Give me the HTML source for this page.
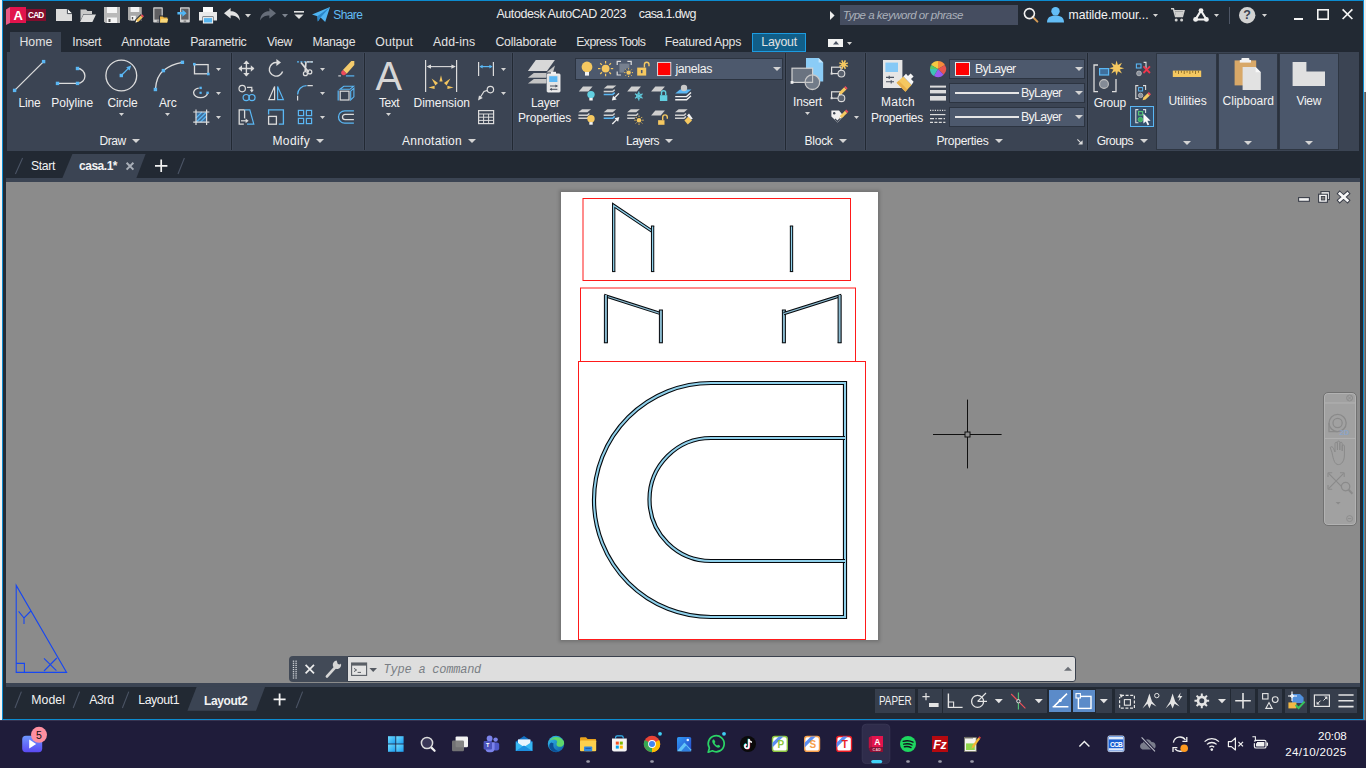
<!DOCTYPE html>
<html lang="en">
<head>
<meta charset="utf-8">
<title>Autodesk AutoCAD 2023 - casa.1.dwg</title>
<style>
*{margin:0;padding:0;box-sizing:border-box}
html,body{width:1366px;height:768px;overflow:hidden;background:#222933}
body{font-family:"Liberation Sans",sans-serif;font-size:12px;color:#f0f0f0;position:relative}
.a{position:absolute}
.t{position:absolute;white-space:nowrap;line-height:14px;color:#f2f2f2}
.b{font-weight:bold}
svg{position:absolute;overflow:visible}
.sep{position:absolute;width:3px;margin-left:-1px;border-left:1px solid #404959;border-right:1px solid #404959;background:#222933;top:53px;height:97px}
.dd{position:absolute;background:#4d596d;border:1px solid #2c3441}
.pl{position:absolute;background:#4b576b;box-shadow:0 0 0 1px #2e3642}
.sb{position:absolute;top:689px;height:23.6px;background:#363e4c}
/*SKEL-END*/
</style>
</head>
<body>
<!-- window frame -->
<div class="a" style="left:0;top:0;width:2px;height:720px;background:#f4f4f4"></div>
<div class="a" style="left:2px;top:0;width:1362px;height:720px;background:#0c8bd0"></div>
<div class="a" style="left:1364px;top:0;width:1px;height:720px;background:#827c7a"></div><div class="a" style="left:1365px;top:0;width:1px;height:720px;background:#5d5d60"></div>
<div class="a" style="left:1364px;top:0;width:2px;height:92px;background:#ececec"></div>
<div class="a" id="win" style="left:3px;top:1px;width:1359.5px;height:718px;background:#222933"></div>

<!-- ribbon background -->
<div class="a" style="left:7px;top:52px;width:1352px;height:99px;background:#3b4453"></div>
<!-- home tab -->
<div class="a" style="left:10px;top:32px;width:51px;height:20px;background:#3b4453"></div>
<!-- layout tab -->
<div class="a" style="left:752px;top:33px;width:54px;height:19px;background:#115e88;border:1px solid #1c9be0"></div>

<!--TITLEBAR-->
<svg style="left:6px;top:7px" width="40" height="18" viewBox="0 0 40 18"><path d="M4 0L0 2.6V18L4 16Z" fill="#ea5a84"/><rect x="4" y="0" width="16" height="16" fill="#e1134c"/><rect x="20" y="2" width="20" height="12" fill="#810d2d"/></svg>
<div class="t" style="left:13.6px;top:8.1px;font-size:13px;line-height:16px;color:#fff;letter-spacing:-0.39px;font-weight:bold;">A</div>
<div class="t" style="left:28.1px;top:10.5px;font-size:8.2px;line-height:10px;color:#fff;letter-spacing:-0.86px;font-weight:bold;">CAD</div>
<svg style="left:56px;top:9px" width="16" height="12" viewBox="0 0 16 12"><path d="M0 0H11.4L16 4.6V12H0Z" fill="#dcdcdc"/><path d="M11.4 0V4.6H16Z" fill="#f8f8f8"/><path d="M11.4 0V4.6H16" fill="none" stroke="#222933" stroke-width="0.8"/></svg>
<svg style="left:80px;top:9px" width="16" height="13" viewBox="0 0 16 13"><path d="M0.5 11.5V0.5H6L7.5 2H12V5H3.5Z" fill="#c9c9c9"/><path d="M3.6 5.5H16L12.4 13H0Z" fill="#dedede"/></svg>
<svg style="left:104px;top:7px" width="16" height="16" viewBox="0 0 16 16"><path d="M0 0H16V16H1.5L0 14.5Z" fill="#b9b9b9"/><rect x="3" y="0" width="10" height="6" fill="#f4f4f4"/><rect x="3" y="10.5" width="10" height="5.5" fill="#f4f4f4"/><rect x="4.5" y="12" width="2" height="3" fill="#555"/></svg>
<svg style="left:128px;top:7px" width="16" height="16" viewBox="0 0 16 16"><path d="M0 0H13.8V13.4H1.2L0 12.2Z" fill="#a9a9a9"/><rect x="2.6" y="0" width="8.6" height="5" fill="#f2f2f2"/><rect x="2.8" y="8.8" width="5" height="4.6" fill="#f2f2f2"/><rect x="3.8" y="10" width="1.4" height="2.4" fill="#555"/><path d="M6.4 16.4L7.4 12.4L12.6 7.2L15.8 10.4L10.6 15.6Z" fill="#222933"/><path d="M7.6 15.4L8.4 12.8L12.8 8.4L14.8 10.4L10.4 14.8Z" fill="#f2c35c"/><path d="M12.8 8.4L14 7.2L16 9.2L14.8 10.4Z" fill="#ee4a5c"/><path d="M7.6 15.4L8.2 13.4L9.6 14.8Z" fill="#fff"/></svg>
<svg style="left:152px;top:7px" width="16" height="16" viewBox="0 0 16 16"><rect x="1.2" y="0.2" width="9.6" height="15.4" rx="0.8" fill="#d0d0d0"/><rect x="2.4" y="1.6" width="7.2" height="11" fill="#5f5f62"/><rect x="4.8" y="13.6" width="2.6" height="1" fill="#666"/><path d="M7.2 16.2V8.6H11.2L12.2 9.8H16.4V16.2Z" fill="#222933"/><path d="M8 9.4H10.8L11.8 10.6H15.4V15.6H8Z" fill="#eeb541"/><path d="M9.2 11.8H16.2L15 15.6H8Z" fill="#f8d87c"/></svg>
<svg style="left:177px;top:7px" width="14" height="16" viewBox="0 0 14 16"><rect x="3" y="0.2" width="9.8" height="15.4" rx="0.8" fill="#d0d0d0"/><rect x="4.2" y="1.6" width="7.4" height="11" fill="#5f5f62"/><rect x="6.6" y="13.6" width="2.6" height="1" fill="#666"/><path d="M0.4 5H5.4V2.6L9.6 6.2L5.4 9.8V7.4H0.4Z" fill="#52b6f4"/></svg>
<svg style="left:199px;top:7px" width="18" height="16" viewBox="0 0 18 16"><rect x="4" y="0" width="10" height="5" fill="#fafafa"/><path d="M0 5H18V13.5H14.5V9.5H3.5V13.5H0Z" fill="#e9e9e9"/><rect x="4.4" y="10.6" width="9.2" height="5.4" fill="#58b6f0" stroke="#f4f4f4" stroke-width="1"/></svg>
<svg style="left:224px;top:8px" width="16" height="13" viewBox="0 0 16 13"><path d="M0 5.2L6.6 0V3.2C11.6 3.2 15.4 5.8 16 12.6C13.6 8.6 10.6 7.6 6.6 7.6V10.6Z" fill="#e2e2e2"/></svg>
<svg style="left:245.0px;top:13.7px" width="6" height="3.6" viewBox="0 0 6 3.6"><path d="M0 0H6L3.0 3.6Z" fill="#d4d4d4"/></svg>
<svg style="left:259.5px;top:8px" width="16" height="13" viewBox="0 0 16 13"><path d="M16 5.2L9.4 0V3.2C4.4 3.2 0.6 5.8 0 12.6C2.4 8.6 5.4 7.6 9.4 7.6V10.6Z" fill="#666d79"/></svg>
<svg style="left:282.0px;top:13.7px" width="6" height="3.6" viewBox="0 0 6 3.6"><path d="M0 0H6L3.0 3.6Z" fill="#7d848f"/></svg>
<svg style="left:294px;top:10.5px" width="10" height="8" viewBox="0 0 10 8"><rect x="0" y="0" width="10" height="1.6" fill="#e0e0e0"/><path d="M0.4 3.4H9.6L5 8Z" fill="#e0e0e0"/></svg>
<svg style="left:312px;top:7px" width="18" height="16" viewBox="0 0 18 16"><path d="M0 7.4L18 0L13.2 15L8.6 10.4L5.8 14.6L5.4 9.2Z" fill="#4fb3f1"/><path d="M5.4 9.2L18 0L8.6 10.4L5.8 14.6Z" fill="#2b86c8"/></svg>
<div class="t" style="left:333.3px;top:7.8px;font-size:12px;line-height:14px;color:#63bdf6;letter-spacing:-0.60px;">Share</div>
<div class="t" style="left:496.4px;top:7.3px;font-size:12.5px;line-height:15px;color:#ececec;letter-spacing:-0.41px;">Autodesk AutoCAD 2023</div>
<div class="t" style="left:638.8px;top:7.3px;font-size:12.5px;line-height:15px;color:#ececec;letter-spacing:-0.63px;">casa.1.dwg</div>
<svg style="left:830px;top:10.6px" width="5" height="9" viewBox="0 0 5 9"><path d="M0 0L4.6 4.5L0 9Z" fill="#eee"/></svg>
<div class="a" style="left:840px;top:5px;width:178px;height:20px;background:#454d60;"></div>
<div class="t" style="left:842.8px;top:8.2px;font-size:11.5px;line-height:14px;color:#aab0ba;letter-spacing:-0.50px;font-style:italic;">Type a keyword or phrase</div>
<svg style="left:1023px;top:7px" width="16" height="16" viewBox="0 0 16 16"><path d="M9.6 9.8L14.4 14.6" stroke="#d49a55" stroke-width="2" stroke-linecap="round"/><circle cx="6.4" cy="6.6" r="5" fill="none" stroke="#f2f2f2" stroke-width="1.6"/></svg>
<svg style="left:1046.5px;top:7px" width="17" height="15.5" viewBox="0 0 17 15.5"><circle cx="8.5" cy="4.2" r="4.2" fill="#63bdf6"/><path d="M0 15.5C0 10.6 3.4 8.6 8.5 8.6S17 10.6 17 15.5Z" fill="#63bdf6"/></svg>
<div class="t" style="left:1068.6px;top:7.9px;font-size:12.2px;line-height:15px;color:#f4f4f4;letter-spacing:-0.00px;">matilde.mour...</div>
<svg style="left:1153.0px;top:14.0px" width="5" height="3" viewBox="0 0 5 3"><path d="M0 0H5L2.5 3Z" fill="#d4d4d4"/></svg>
<svg style="left:1170.5px;top:8px" width="13.5" height="14" viewBox="0 0 13.5 14"><path d="M0 0.8H2.4L4.6 8.6H11.4L13 2.8H3.2" fill="none" stroke="#d0d0d0" stroke-width="1.5"/><path d="M3.8 3.4H12.6L11.2 8H5Z" fill="#d0d0d0"/><circle cx="5.2" cy="12" r="1.5" fill="#d0d0d0"/><circle cx="10.6" cy="12" r="1.5" fill="#d0d0d0"/></svg>
<svg style="left:1192.5px;top:8px" width="16" height="14" viewBox="0 0 16 14"><path d="M8 2.6L2.4 11.6H13.6Z" fill="none" stroke="#f0f0f0" stroke-width="2"/><circle cx="8" cy="2.6" r="2.4" fill="#f0f0f0"/><circle cx="2.6" cy="11.4" r="2.4" fill="#f0f0f0"/><circle cx="13.4" cy="11.4" r="2.4" fill="#f0f0f0"/></svg>
<svg style="left:1214.1px;top:14.0px" width="5" height="3" viewBox="0 0 5 3"><path d="M0 0H5L2.5 3Z" fill="#d4d4d4"/></svg>
<div class="a" style="left:1229.4px;top:7px;width:1px;height:17px;background:#4e5666;"></div>
<svg style="left:1238.6px;top:7px" width="16.4" height="16.4" viewBox="0 0 16.4 16.4"><circle cx="8.2" cy="8.2" r="8.2" fill="#d2d2d2"/></svg>
<div class="t" style="left:1243.2px;top:7.8px;font-size:12.5px;line-height:15px;color:#3a4250;font-weight:bold;">?</div>
<svg style="left:1261.5px;top:14.0px" width="5" height="3" viewBox="0 0 5 3"><path d="M0 0H5L2.5 3Z" fill="#d4d4d4"/></svg>
<div class="a" style="left:1293.5px;top:18px;width:9px;height:2px;background:#f4f4f4;"></div>
<svg style="left:1317px;top:9px" width="12" height="11" viewBox="0 0 12 11"><rect x="0.8" y="0.8" width="10.4" height="9.4" fill="none" stroke="#f4f4f4" stroke-width="1.6"/></svg>
<svg style="left:1342px;top:9px" width="11" height="10.4" viewBox="0 0 11 10.4"><path d="M0.6 0.4L10.4 10M10.4 0.4L0.6 10" stroke="#f4f4f4" stroke-width="1.7"/></svg>
<div class="a" style="left:828px;top:38.6px;width:15px;height:8.4px;background:#f2f2f2;"></div>
<svg style="left:832.5px;top:41px" width="6" height="3.4" viewBox="0 0 6 3.4"><path d="M0 3.4H6L3 0Z" fill="#4a5262"/></svg>
<svg style="left:847.1px;top:41.5px" width="5" height="3" viewBox="0 0 5 3"><path d="M0 0H5L2.5 3Z" fill="#d4d4d4"/></svg>

<!--RIBBONTABS-->
<div class="t" style="left:19.4px;top:35.3px;font-size:12.3px;line-height:15px;color:#e2e2e2;letter-spacing:0.05px;">Home</div>
<div class="t" style="left:72.3px;top:35.3px;font-size:12.3px;line-height:15px;color:#e2e2e2;letter-spacing:-0.33px;">Insert</div>
<div class="t" style="left:121.2px;top:35.3px;font-size:12.3px;line-height:15px;color:#e2e2e2;letter-spacing:-0.06px;">Annotate</div>
<div class="t" style="left:190.2px;top:35.3px;font-size:12.3px;line-height:15px;color:#e2e2e2;letter-spacing:-0.32px;">Parametric</div>
<div class="t" style="left:267.0px;top:35.3px;font-size:12.3px;line-height:15px;color:#e2e2e2;letter-spacing:-0.36px;">View</div>
<div class="t" style="left:312.5px;top:35.3px;font-size:12.3px;line-height:15px;color:#e2e2e2;letter-spacing:-0.29px;">Manage</div>
<div class="t" style="left:375.3px;top:35.3px;font-size:12.3px;line-height:15px;color:#e2e2e2;letter-spacing:0.13px;">Output</div>
<div class="t" style="left:433.0px;top:35.3px;font-size:12.3px;line-height:15px;color:#e2e2e2;letter-spacing:0.07px;">Add-ins</div>
<div class="t" style="left:495.4px;top:35.3px;font-size:12.3px;line-height:15px;color:#e2e2e2;letter-spacing:-0.18px;">Collaborate</div>
<div class="t" style="left:576.2px;top:35.3px;font-size:12.3px;line-height:15px;color:#e2e2e2;letter-spacing:-0.56px;">Express Tools</div>
<div class="t" style="left:664.7px;top:35.3px;font-size:12.3px;line-height:15px;color:#e2e2e2;letter-spacing:-0.28px;">Featured Apps</div>
<div class="t" style="left:761.3px;top:35.3px;font-size:12.3px;line-height:15px;color:#e2e2e2;letter-spacing:-0.21px;">Layout</div>

<!--RIBBON-->
<div class="sep" style="left:231px"></div>
<div class="sep" style="left:364px"></div>
<div class="sep" style="left:512px"></div>
<div class="sep" style="left:785px"></div>
<div class="sep" style="left:865px"></div>
<div class="sep" style="left:1087px"></div>
<svg style="left:0px;top:0px" width="232" height="150" viewBox="0 0 232 150"><path d="M14.6 90.4L43.6 61.6" stroke="#dcdcdc" stroke-width="1.3"/><rect x="12.9" y="88.7" width="3.4" height="3.4" fill="#5ab7f4"/><rect x="41.9" y="59.9" width="3.4" height="3.4" fill="#5ab7f4"/><path d="M57.5 83.4H77.5A7.45 7.45 0 0 0 77.5 68.5" fill="none" stroke="#dcdcdc" stroke-width="1.3"/><rect x="55.8" y="81.7" width="3.4" height="3.4" fill="#5ab7f4"/><rect x="75.8" y="81.7" width="3.4" height="3.4" fill="#5ab7f4"/><rect x="75.8" y="66.8" width="3.4" height="3.4" fill="#5ab7f4"/><circle cx="121.3" cy="75.5" r="15.4" fill="none" stroke="#dcdcdc" stroke-width="1.3"/><rect x="119.6" y="73.8" width="3.4" height="3.4" fill="#5ab7f4"/><path d="M122.5 74.3L129.4 67.4" stroke="#5ab7f4" stroke-width="1.3"/><path d="M131.2 65.4L126.2 67.2L129.6 70.4Z" fill="#5ab7f4"/><path d="M155.4 89.5C156 80 158.5 74.5 163.4 70.6C168 66.6 174 63.6 182.4 62.3" fill="none" stroke="#dcdcdc" stroke-width="1.3"/><rect x="153.7" y="87.8" width="3.4" height="3.4" fill="#5ab7f4"/><rect x="161.7" y="68.9" width="3.4" height="3.4" fill="#5ab7f4"/><rect x="180.7" y="60.6" width="3.4" height="3.4" fill="#5ab7f4"/><rect x="194.5" y="64.6" width="13.6" height="9.2" fill="none" stroke="#dcdcdc" stroke-width="1.3"/><rect x="193.0" y="62.9" width="2.6" height="2.6" fill="#5ab7f4"/><rect x="207.0" y="72.7" width="2.6" height="2.6" fill="#5ab7f4"/><ellipse cx="200.6" cy="92.8" rx="7" ry="4.9" fill="none" stroke="#dcdcdc" stroke-width="1.3" stroke-dasharray="26 5 0"/><rect x="199.5" y="91.7" width="2.2" height="2.2" fill="#5ab7f4"/><rect x="206.4" y="91.6" width="2.4" height="2.4" fill="#5ab7f4"/><rect x="199.4" y="86.7" width="2.4" height="2.4" fill="#5ab7f4"/><rect x="196" y="112" width="10.6" height="10.2" fill="#3f6f9c"/><path d="M196 118L202 112M196 122.2L206.6 112M200.4 122.2L206.6 116" stroke="#5ab7f4" stroke-width="1.2"/><path d="M196 109.4V125M206.6 109.4V125M193.2 112H209.4M193.2 122.2H209.4" stroke="#dcdcdc" stroke-width="1.2"/></svg>
<div class="t" style="left:18.5px;top:95.8px;font-size:12px;line-height:14px;color:#f2f2f2;letter-spacing:-0.17px;">Line</div>
<div class="t" style="left:51.3px;top:95.8px;font-size:12px;line-height:14px;color:#f2f2f2;letter-spacing:-0.03px;">Polyline</div>
<div class="t" style="left:107.5px;top:95.8px;font-size:12px;line-height:14px;color:#f2f2f2;letter-spacing:-0.11px;">Circle</div>
<div class="t" style="left:159.0px;top:95.8px;font-size:12px;line-height:14px;color:#f2f2f2;letter-spacing:-0.13px;">Arc</div>
<svg style="left:119.2px;top:113.1px" width="5" height="3" viewBox="0 0 5 3"><path d="M0 0H5L2.5 3Z" fill="#d4d4d4"/></svg>
<svg style="left:164.9px;top:113.1px" width="5" height="3" viewBox="0 0 5 3"><path d="M0 0H5L2.5 3Z" fill="#d4d4d4"/></svg>
<svg style="left:216.3px;top:67.9px" width="5" height="3" viewBox="0 0 5 3"><path d="M0 0H5L2.5 3Z" fill="#d4d4d4"/></svg>
<svg style="left:216.3px;top:92.0px" width="5" height="3" viewBox="0 0 5 3"><path d="M0 0H5L2.5 3Z" fill="#d4d4d4"/></svg>
<svg style="left:216.3px;top:116.0px" width="5" height="3" viewBox="0 0 5 3"><path d="M0 0H5L2.5 3Z" fill="#d4d4d4"/></svg>
<div class="t" style="left:99.5px;top:133.8px;font-size:12px;line-height:14px;color:#f2f2f2;letter-spacing:-0.43px;">Draw</div>
<svg style="left:132.0px;top:139.0px" width="8" height="4" viewBox="0 0 8 4"><path d="M0 0H8L4.0 4Z" fill="#d4d4d4"/></svg>
<svg style="left:0px;top:0px" width="370" height="150" viewBox="0 0 370 150"><path d="M239.0 68.5H253.8M246.4 61.1V75.9" stroke="#dcdcdc" stroke-width="1.4"/><path d="M238.4 68.5L242.0 65.3V71.7Z" fill="#dcdcdc"/><path d="M254.4 68.5L250.8 65.3V71.7Z" fill="#dcdcdc"/><path d="M246.4 60.5L243.20000000000002 64.1H249.6Z" fill="#dcdcdc"/><path d="M246.4 76.5L243.20000000000002 72.9H249.6Z" fill="#dcdcdc"/><path d="M282.6 71.5A6.8 6.8 0 1 1 277 62.599999999999994" fill="none" stroke="#dcdcdc" stroke-width="1.4"/><path d="M276.4 58.9L281 62.5L276.4 66.1Z" fill="#dcdcdc"/><path d="M297 61.9H313" stroke="#5ab7f4" stroke-width="1.2" stroke-dasharray="2 1.4"/><path d="M307 61.9H313" stroke="#dcdcdc" stroke-width="1.2"/><path d="M301 62.5L308.6 72.1M306 61.5L305.2 71.1" stroke="#dcdcdc" stroke-width="1.7"/><circle cx="305.4" cy="73.7" r="2" fill="none" stroke="#dcdcdc" stroke-width="1.2"/><circle cx="309.8" cy="71.9" r="2" fill="none" stroke="#dcdcdc" stroke-width="1.2"/><path d="M342.90000000000003 70.1L351.3 60.9L354.3 60.9V65.1L346.7 73.7Z" fill="#f4cb6c"/><path d="M342.90000000000003 70.1L346.7 73.7L344.7 75.1A2.6 2.6 0 0 1 341.3 71.7Z" fill="#ee4a5c"/><path d="M338.3 75.9H340.90000000000003" stroke="#dcdcdc" stroke-width="1.1"/><path d="M345.90000000000003 75.9H354.3" stroke="#5ab7f4" stroke-width="1.2"/><circle cx="242.20000000000002" cy="88.6" r="3.2" fill="none" stroke="#dcdcdc" stroke-width="1.2"/><path d="M247.0 87.4H251.8V90.4" fill="none" stroke="#dcdcdc" stroke-width="1.2"/><path d="M251.8 92.6L249.8 89.8H253.8Z" fill="#dcdcdc"/><circle cx="246.20000000000002" cy="97.6" r="3.1" fill="none" stroke="#5ab7f4" stroke-width="1.2"/><circle cx="252.0" cy="97.6" r="3.1" fill="none" stroke="#5ab7f4" stroke-width="1.2"/><path d="M274.6 86.4V99.6H268.8Z" fill="none" stroke="#dcdcdc" stroke-width="1.2"/><path d="M277.6 86.4V99.6H283.4Z" fill="none" stroke="#5ab7f4" stroke-width="1.2"/><path d="M297.6 94.6A9 9 0 0 1 306.6 85.6" fill="none" stroke="#5ab7f4" stroke-width="1.3"/><path d="M307.4 85.6H312.8M297.6 95.8V100.6" stroke="#dcdcdc" stroke-width="1.2"/><rect x="340.2" y="91.2" width="8.8" height="8.8" fill="none" stroke="#dcdcdc" stroke-width="1.2"/><path d="M338.2 90.6V100.6" stroke="#5ab7f4" stroke-width="1.2"/><path d="M340 89.3L343.8 86.2H353.6L349.9 89.3Z" fill="none" stroke="#5ab7f4" stroke-width="1.1"/><path d="M350.7 91.1L353.9 88.3V96.8L350.7 99.9Z" fill="none" stroke="#5ab7f4" stroke-width="1.1"/><path d="M244.6 109.8H239.20000000000002V124.2H243.8" fill="none" stroke="#dcdcdc" stroke-width="1.3"/><path d="M244.6 109.8V118.4" stroke="#dcdcdc" stroke-width="1.3"/><path d="M244.6 109.8H249.8L253.8 124.2H247.0" fill="none" stroke="#5ab7f4" stroke-width="1.2"/><path d="M241.0 120.8H246.0" stroke="#dcdcdc" stroke-width="1.2"/><path d="M248.6 120.8L245.6 118.4V123.2Z" fill="#dcdcdc"/><path d="M268.6 114.4V109.8H283.4V124.2H278.8" fill="none" stroke="#5ab7f4" stroke-width="1.3"/><rect x="268.6" y="116.4" width="7.8" height="7.8" fill="none" stroke="#dcdcdc" stroke-width="1.3"/><rect x="298.4" y="110.4" width="5.2" height="5.2" fill="none" stroke="#5ab7f4" stroke-width="1.2"/><rect x="298.4" y="118.4" width="5.2" height="5.2" fill="none" stroke="#5ab7f4" stroke-width="1.2"/><rect x="306.4" y="110.4" width="5.2" height="5.2" fill="none" stroke="#5ab7f4" stroke-width="1.2"/><rect x="306.4" y="118.4" width="5.2" height="5.2" fill="none" stroke="#5ab7f4" stroke-width="1.2"/><path d="M353.90000000000003 110.8H344.7A6.2 6.2 0 0 0 344.7 123.2H353.90000000000003" fill="none" stroke="#5ab7f4" stroke-width="1.3"/><path d="M353.90000000000003 114.4H345.1A2.6 2.6 0 0 0 345.1 119.6H353.90000000000003" fill="none" stroke="#dcdcdc" stroke-width="1.3"/></svg>
<svg style="left:320.1px;top:67.9px" width="5" height="3" viewBox="0 0 5 3"><path d="M0 0H5L2.5 3Z" fill="#d4d4d4"/></svg>
<svg style="left:320.1px;top:92.0px" width="5" height="3" viewBox="0 0 5 3"><path d="M0 0H5L2.5 3Z" fill="#d4d4d4"/></svg>
<svg style="left:320.1px;top:116.0px" width="5" height="3" viewBox="0 0 5 3"><path d="M0 0H5L2.5 3Z" fill="#d4d4d4"/></svg>
<div class="t" style="left:272.5px;top:133.8px;font-size:12px;line-height:14px;color:#f2f2f2;letter-spacing:0.36px;">Modify</div>
<svg style="left:316.0px;top:139.0px" width="8" height="4" viewBox="0 0 8 4"><path d="M0 0H8L4.0 4Z" fill="#d4d4d4"/></svg>
<div class="t" style="left:375.6px;top:52.2px;font-size:39.8px;line-height:48px;color:#d6d6d6;line-height:48px;">A</div>
<svg style="left:0px;top:0px" width="512" height="150" viewBox="0 0 512 150"><path d="M425.6 60V92M456.6 60V92" stroke="#dcdcdc" stroke-width="1.2"/><path d="M428 66.6H454.4" stroke="#dcdcdc" stroke-width="1.1"/><path d="M426.6 66.6L431 64.4V68.8ZM455.8 66.6L451.4 64.4V68.8Z" fill="#dcdcdc"/><path d="M441 75.2L442.6 81.6H439.4Z M431.6 78.6L438 83L435.4 85.4Z M450.4 78.6L446.6 85.4L444 83Z M428.4 87.4L434.6 85.8V89Z M453.6 87.4L447.4 89V85.8Z" fill="#f3c55f"/><path d="M478.6 62V76M493.4 62V76" stroke="#dcdcdc" stroke-width="1.2"/><path d="M480.4 66.6H491.6" stroke="#5ab7f4" stroke-width="1.2"/><path d="M479.4 66.6L482.6 64.8V68.4ZM492.6 66.6L489.4 64.8V68.4Z" fill="#5ab7f4"/><circle cx="490.4" cy="89.6" r="3.2" fill="none" stroke="#dcdcdc" stroke-width="1.2"/><path d="M487.4 90.4L484 91.4L479.8 98" fill="none" stroke="#dcdcdc" stroke-width="1.2"/><path d="M478 100.4L479 95.6L482.8 98Z" fill="#dcdcdc"/><rect x="478.6" y="110.6" width="15" height="13" fill="none" stroke="#dcdcdc" stroke-width="1.2"/><path d="M478.6 114H493.6M478.6 117.2H493.6M478.6 120.4H493.6M483.6 114V123.6M488.6 114V123.6" stroke="#dcdcdc" stroke-width="1"/></svg>
<div class="t" style="left:379.0px;top:95.8px;font-size:12px;line-height:14px;color:#f2f2f2;letter-spacing:-0.50px;">Text</div>
<div class="t" style="left:413.6px;top:95.8px;font-size:12px;line-height:14px;color:#f2f2f2;letter-spacing:-0.03px;">Dimension</div>
<svg style="left:386.0px;top:113.1px" width="5" height="3" viewBox="0 0 5 3"><path d="M0 0H5L2.5 3Z" fill="#d4d4d4"/></svg>
<svg style="left:501.1px;top:67.9px" width="5" height="3" viewBox="0 0 5 3"><path d="M0 0H5L2.5 3Z" fill="#d4d4d4"/></svg>
<svg style="left:501.1px;top:92.0px" width="5" height="3" viewBox="0 0 5 3"><path d="M0 0H5L2.5 3Z" fill="#d4d4d4"/></svg>
<div class="t" style="left:402.0px;top:133.8px;font-size:12px;line-height:14px;color:#f2f2f2;letter-spacing:0.26px;">Annotation</div>
<svg style="left:468.0px;top:139.0px" width="8" height="4" viewBox="0 0 8 4"><path d="M0 0H8L4.0 4Z" fill="#d4d4d4"/></svg>
<svg style="left:0px;top:0px" width="570" height="150" viewBox="0 0 570 150"><path d="M527.9 77.7L533.8 73.1H552L546 77.7Z" fill="#c4c4c4"/><path d="M527.9 83.6L533.8 79H552L546 83.6Z" fill="#c4c4c4"/><path d="M546.4 72.4L555 65.4L553 72.4Z" fill="#c4c4c4"/><path d="M527.9 71.1L535.8 59.9H554.9L547 71.1Z" fill="#d8d8d8"/><rect x="546.4" y="73.2" width="14.4" height="19.4" fill="#3b4453"/><rect x="547.2" y="74" width="12.8" height="18" rx="0.8" fill="#e4e4e4" stroke="#f8f8f8" stroke-width="0.9"/><rect x="551" y="71.8" width="5" height="2.4" fill="#f2f2f2"/><rect x="549.2" y="76.2" width="8.2" height="5.8" fill="#5ab7f4"/><path d="M550 86H557.4M550 89.3H557.4" stroke="#4a5260" stroke-width="1"/><path d="M557.8 86L555.4 84.6V87.4ZM549.6 89.3L552 87.9V90.7Z" fill="#4a5260"/></svg>
<div class="t" style="left:531.0px;top:95.8px;font-size:12px;line-height:14px;color:#f2f2f2;letter-spacing:-0.30px;">Layer</div>
<div class="t" style="left:518.0px;top:110.5px;font-size:12px;line-height:14px;color:#f2f2f2;letter-spacing:-0.17px;">Properties</div>
<div class="dd" style="left:575px;top:58px;width:208.4px;height:21.6px"></div>
<svg style="left:0px;top:0px" width="790" height="150" viewBox="0 0 790 150"><circle cx="587" cy="67" r="5.4" fill="#f5c860"/><rect x="585" y="72" width="4" height="3.6" fill="#f4f4f4"/><circle cx="605.6" cy="68.6" r="3.9" fill="#f5c860"/><path d="M610.80 68.60L613.20 68.60" stroke="#f5c860" stroke-width="1.2"/><path d="M609.28 72.28L610.97 73.97" stroke="#f5c860" stroke-width="1.2"/><path d="M605.60 73.80L605.60 76.20" stroke="#f5c860" stroke-width="1.2"/><path d="M601.92 72.28L600.23 73.97" stroke="#f5c860" stroke-width="1.2"/><path d="M600.40 68.60L598.00 68.60" stroke="#f5c860" stroke-width="1.2"/><path d="M601.92 64.92L600.23 63.23" stroke="#f5c860" stroke-width="1.2"/><path d="M605.60 63.40L605.60 61.00" stroke="#f5c860" stroke-width="1.2"/><path d="M609.28 64.92L610.97 63.23" stroke="#f5c860" stroke-width="1.2"/><rect x="619.4" y="63.6" width="10" height="9" fill="#76808f"/><path d="M617.2 65V61.4H621M627.4 61.4H631.2V65M617.2 71.4V75H621" fill="none" stroke="#dcdcdc" stroke-width="1.2"/><circle cx="628.6" cy="72.6" r="4.6" fill="#4d596d"/><circle cx="628.6" cy="72.6" r="2.2" fill="#f5c860"/><path d="M631.80 72.60L633.00 72.60" stroke="#f5c860" stroke-width="1"/><path d="M630.86 74.86L631.71 75.71" stroke="#f5c860" stroke-width="1"/><path d="M628.60 75.80L628.60 77.00" stroke="#f5c860" stroke-width="1"/><path d="M626.34 74.86L625.49 75.71" stroke="#f5c860" stroke-width="1"/><path d="M625.40 72.60L624.20 72.60" stroke="#f5c860" stroke-width="1"/><path d="M626.34 70.34L625.49 69.49" stroke="#f5c860" stroke-width="1"/><path d="M628.60 69.40L628.60 68.20" stroke="#f5c860" stroke-width="1"/><path d="M630.86 70.34L631.71 69.49" stroke="#f5c860" stroke-width="1"/><rect x="637.2" y="67.6" width="9" height="8" fill="#f5c860"/><path d="M644.4000000000001 67.6V64.6A2.3 2.3 0 0 1 649.0 64.6V66.19999999999999" fill="none" stroke="#f5c860" stroke-width="1.4"/><rect x="640.9" y="70" width="1.6" height="3.2" fill="#4d596d"/><rect x="657.6" y="62.4" width="13.2" height="13.2" fill="#ff0000" stroke="#e8e8e8" stroke-width="0.9"/></svg>
<div class="t" style="left:675.4px;top:62.0px;font-size:12.3px;line-height:15px;color:#f2f2f2;letter-spacing:-0.34px;">janelas</div>
<svg style="left:773.0px;top:67.0px" width="8" height="4" viewBox="0 0 8 4"><path d="M0 0H8L4.0 4Z" fill="#d4d4d4"/></svg>
<svg style="left:0px;top:0px" width="790" height="150" viewBox="0 0 790 150"><path d="M578.8 91.6L583.0 86.4H592.6L588.4 91.6Z" fill="#cfcfcf"/><circle cx="591" cy="94.6" r="3.7" fill="#62cfe0"/><rect x="589.3" y="97.89999999999999" width="3.4" height="2.6" fill="#f4f4f4"/><path d="M603.7 88.4L607.3 85.4H616.3L612.7 88.4Z" fill="#cfcfcf"/><path d="M603.7 91.5H612.7L614.7 89.7" fill="none" stroke="#cfcfcf" stroke-width="1.5"/><path d="M603.7 94.4H612.7L614.7 92.6" fill="none" stroke="#5ab7f4" stroke-width="1.5"/><path d="M618.9 93.4L614.0999999999999 98.2" stroke="#f2f2f2" stroke-width="1.3"/><path d="M611.9 100.6L613.0999999999999 95.8L616.6999999999999 99.4Z" fill="#f2f2f2"/><path d="M627.2 91.6L631.4 86.4H641.0L636.8 91.6Z" fill="#cfcfcf"/><path d="M638.8 96L642.61 98.20" stroke="#62cfe0" stroke-width="1.2"/><path d="M638.8 96L638.80 100.40" stroke="#62cfe0" stroke-width="1.2"/><path d="M638.8 96L634.99 98.20" stroke="#62cfe0" stroke-width="1.2"/><path d="M638.8 96L634.99 93.80" stroke="#62cfe0" stroke-width="1.2"/><path d="M638.8 96L638.80 91.60" stroke="#62cfe0" stroke-width="1.2"/><path d="M638.8 96L642.61 93.80" stroke="#62cfe0" stroke-width="1.2"/><circle cx="638.8" cy="96" r="2.4" fill="none" stroke="#62cfe0" stroke-width="0.9"/><path d="M651.1 91.6L655.3 86.4H664.9L660.7 91.6Z" fill="#cfcfcf"/><rect x="659.9" y="95.2" width="7.4" height="5.8" fill="#62cfe0"/><path d="M661.5 95.2V92.8A2.1 2.1 0 0 1 665.6999999999999 92.8V95.2" fill="none" stroke="#62cfe0" stroke-width="1.4"/><path d="M675.1999999999999 93.6L680.0 89.4H691.4L686.8 93.6Z" fill="#5ab7f4"/><circle cx="684.0" cy="88" r="3.2" fill="#c9c9c9"/><path d="M675.1999999999999 96.6H686.6L691.0 92.6M675.1999999999999 99.8H686.6L691.0 95.8" fill="none" stroke="#f2f2f2" stroke-width="1.4"/><path d="M578.4 112.2L582.0 109.2H591.0L587.4 112.2Z" fill="#cfcfcf"/><path d="M578.4 115.3H587.4L589.4 113.5" fill="none" stroke="#cfcfcf" stroke-width="1.5"/><path d="M578.4 118.2H587.4L589.4 116.4" fill="none" stroke="#cfcfcf" stroke-width="1.5"/><circle cx="591" cy="118.8" r="3.7" fill="#f5c860"/><rect x="589.3" y="122.1" width="3.4" height="2.6" fill="#f4f4f4"/><path d="M603.7 112.2L607.3 109.2H616.3L612.7 112.2Z" fill="#cfcfcf"/><path d="M603.7 115.3H612.7L614.7 113.5" fill="none" stroke="#cfcfcf" stroke-width="1.5"/><path d="M603.7 118.2H612.7L614.7 116.4" fill="none" stroke="#5ab7f4" stroke-width="1.5"/><path d="M612.3 124L616.9 119.4" stroke="#f2f2f2" stroke-width="1.3"/><path d="M619.3 117L618.0999999999999 121.8L614.5 118.2Z" fill="#f2f2f2"/><path d="M627.2 112.2L630.8 109.2H639.8L636.2 112.2Z" fill="#cfcfcf"/><path d="M627.2 115.3H636.2L638.2 113.5" fill="none" stroke="#cfcfcf" stroke-width="1.5"/><path d="M627.2 118.2H636.2L638.2 116.4" fill="none" stroke="#cfcfcf" stroke-width="1.5"/><circle cx="639.0" cy="120.2" r="4.6" fill="#3b4453"/><circle cx="639.0" cy="120.2" r="2.3" fill="#f5c860"/><path d="M642.30 120.20L643.60 120.20" stroke="#f5c860" stroke-width="1"/><path d="M641.33 122.53L642.25 123.45" stroke="#f5c860" stroke-width="1"/><path d="M639.00 123.50L639.00 124.80" stroke="#f5c860" stroke-width="1"/><path d="M636.67 122.53L635.75 123.45" stroke="#f5c860" stroke-width="1"/><path d="M635.70 120.20L634.40 120.20" stroke="#f5c860" stroke-width="1"/><path d="M636.67 117.87L635.75 116.95" stroke="#f5c860" stroke-width="1"/><path d="M639.00 116.90L639.00 115.60" stroke="#f5c860" stroke-width="1"/><path d="M641.33 117.87L642.25 116.95" stroke="#f5c860" stroke-width="1"/><path d="M651.1 115.6L655.3 110.4H664.9L660.7 115.6Z" fill="#cfcfcf"/><rect x="658.0999999999999" y="120.2" width="6.4" height="4.6" fill="#f5c860"/><path d="M662.6999999999999 120.2V117.2A2.3 2.3 0 0 1 667.2999999999998 117.2V118.8" fill="none" stroke="#f5c860" stroke-width="1.4"/><path d="M675.0 112.2L678.6 109.2H687.6L684.0 112.2Z" fill="#cfcfcf"/><path d="M675.0 115.3H684.0L686.0 113.5" fill="none" stroke="#cfcfcf" stroke-width="1.5"/><path d="M675.0 118.2H684.0L686.0 116.4" fill="none" stroke="#cfcfcf" stroke-width="1.5"/><path d="M684.4 120.4L688.4 116.6L692.0 120.6L687.8 124.6Z" fill="#f5c860"/><path d="M687.0 115.4L689.0 113.4L691.4 116.8L692.8 118.8L691.0 119.6Z" fill="#f4f4f4"/></svg>
<div class="t" style="left:626.0px;top:133.8px;font-size:12px;line-height:14px;color:#f2f2f2;letter-spacing:-0.50px;">Layers</div>
<svg style="left:665.0px;top:139.0px" width="8" height="4" viewBox="0 0 8 4"><path d="M0 0H8L4.0 4Z" fill="#d4d4d4"/></svg>
<svg style="left:0px;top:0px" width="870" height="150" viewBox="0 0 870 150"><path d="M806 58H818.6L823.2 62.6V81.6H806Z" fill="#8bccf6"/><path d="M818.6 58V62.6H823.2Z" fill="#c6e6fb"/><rect x="792" y="68.2" width="20.6" height="14.2" fill="#6a7380" stroke="#d2d2d2" stroke-width="1.2"/><circle cx="812.4" cy="82.2" r="7.3" fill="#737c89"/><path d="M805 82.4H812.6V75" fill="none" stroke="#c9c9c9" stroke-width="1.1"/><circle cx="812.4" cy="82.2" r="7.3" fill="none" stroke="#c8c8c8" stroke-width="1.3"/><rect x="790.6" y="81" width="2.8" height="2.8" fill="#f0f0f0"/><rect x="831.6" y="67.2" width="9.4" height="6.4" fill="none" stroke="#dcdcdc" stroke-width="1.2"/><circle cx="841.4" cy="73.6" r="3.4" fill="#59616e" stroke="#dcdcdc" stroke-width="1.1"/><rect x="830.6" y="72.6" width="2" height="2" fill="#dcdcdc"/><path d="M843.6 64.6L847.85 66.36" stroke="#f5c860" stroke-width="1.5"/><path d="M843.6 64.6L845.36 68.85" stroke="#f5c860" stroke-width="1.5"/><path d="M843.6 64.6L841.84 68.85" stroke="#f5c860" stroke-width="1.5"/><path d="M843.6 64.6L839.35 66.36" stroke="#f5c860" stroke-width="1.5"/><path d="M843.6 64.6L839.35 62.84" stroke="#f5c860" stroke-width="1.5"/><path d="M843.6 64.6L841.84 60.35" stroke="#f5c860" stroke-width="1.5"/><path d="M843.6 64.6L845.36 60.35" stroke="#f5c860" stroke-width="1.5"/><path d="M843.6 64.6L847.85 62.84" stroke="#f5c860" stroke-width="1.5"/><circle cx="843.6" cy="64.6" r="2.2" fill="#f5c860"/><rect x="831.6" y="91.8" width="9.4" height="6.4" fill="none" stroke="#dcdcdc" stroke-width="1.2"/><circle cx="841.4" cy="98.19999999999999" r="3.4" fill="#59616e" stroke="#dcdcdc" stroke-width="1.1"/><rect x="830.6" y="97.19999999999999" width="2" height="2" fill="#dcdcdc"/><path d="M838.6 95L839.6 91.8L844.2 87.2L846.4 89.4L841.8000000000001 94Z" fill="#f5c860"/><path d="M844.2 87.2L845.4 86L847.6 88.2L846.4 89.4Z" fill="#ee4a5c"/><path d="M838.6 95L839.2 93L840.6 94.4Z" fill="#fff"/><path d="M831.4 110.4H839L843.6 116L837.6 122.4L831.4 116.6Z" fill="#f0f0f0"/><circle cx="834.2" cy="113.2" r="1.2" fill="#3b4453"/><path d="M835 119L837.6 121.4L842 116" fill="none" stroke="#3b4453" stroke-width="1.2"/><path d="M839.4 118.6L840.4 115.39999999999999L845.0 110.8L847.1999999999999 113.0L842.6 117.6Z" fill="#f5c860"/><path d="M845.0 110.8L846.1999999999999 109.6L848.4 111.8L847.1999999999999 113.0Z" fill="#ee4a5c"/><path d="M839.4 118.6L840.0 116.6L841.4 118.0Z" fill="#fff"/></svg>
<div class="t" style="left:793.0px;top:95.4px;font-size:12px;line-height:14px;color:#f2f2f2;letter-spacing:-0.17px;">Insert</div>
<svg style="left:804.9px;top:112.0px" width="5" height="3" viewBox="0 0 5 3"><path d="M0 0H5L2.5 3Z" fill="#d4d4d4"/></svg>
<svg style="left:853.5px;top:115.5px" width="5" height="3" viewBox="0 0 5 3"><path d="M0 0H5L2.5 3Z" fill="#d4d4d4"/></svg>
<div class="t" style="left:804.6px;top:133.8px;font-size:12px;line-height:14px;color:#f2f2f2;letter-spacing:-0.27px;">Block</div>
<svg style="left:839.0px;top:139.0px" width="8" height="4" viewBox="0 0 8 4"><path d="M0 0H8L4.0 4Z" fill="#d4d4d4"/></svg>
<svg style="left:0px;top:0px" width="950" height="150" viewBox="0 0 950 150"><rect x="883" y="60" width="19.4" height="28" fill="#e6e6e6"/><rect x="885.4" y="62.6" width="12.6" height="9.4" fill="#86c9f6"/><path d="M886 77.4H894M886 81.8H894M889.2 75.8V79M891.2 80.2V83.4" stroke="#4a5260" stroke-width="1.1"/><path d="M896.6 82.8L903.4 76.4L911.6 85L905.4 91.8Z" fill="#f5c860"/><path d="M903.4 76.4L906 73.8L908 76L910.6 73.4L913.6 76.6L911 79L913.6 81.8L911.6 85Z" fill="#f6f6f6"/><path d="M896.6 82.8L898.8 80.8L907.4 89.6L905.4 91.8Z" fill="#e9b04a"/><path d="M938 69L931.07 65.00A8 8 0 0 1 938.00 61.00Z" fill="#f5c842"/><path d="M938 69L938.00 61.00A8 8 0 0 1 944.93 65.00Z" fill="#f58a3c"/><path d="M938 69L944.93 65.00A8 8 0 0 1 943.66 74.66Z" fill="#e8554f"/><path d="M938 69L943.66 74.66A8 8 0 0 1 934.00 75.93Z" fill="#9a5cf0"/><path d="M938 69L934.00 75.93A8 8 0 0 1 930.00 69.00Z" fill="#3fc4b4"/><path d="M938 69L930.00 69.00A8 8 0 0 1 931.07 65.00Z" fill="#58c868"/><rect x="930" y="85.6" width="16" height="2" fill="#dcdcdc"/><rect x="930" y="90" width="16" height="3.4" fill="#dcdcdc"/><rect x="930" y="96" width="16" height="4.6" fill="#dcdcdc"/><path d="M930 110.4H945.4" stroke="#dcdcdc" stroke-width="1.2" stroke-dasharray="1.2 1.2"/><path d="M930 114.6H945.4" stroke="#dcdcdc" stroke-width="1.2"/><path d="M930 118.6H945.4" stroke="#dcdcdc" stroke-width="1.2" stroke-dasharray="4 1.4 1.4 1.4"/><path d="M930 122.4H945.4" stroke="#dcdcdc" stroke-width="1.2" stroke-dasharray="3 1.4"/></svg>
<div class="t" style="left:881.0px;top:95.4px;font-size:12px;line-height:14px;color:#f2f2f2;letter-spacing:0.26px;">Match</div>
<div class="t" style="left:871.0px;top:110.6px;font-size:12px;line-height:14px;color:#f2f2f2;letter-spacing:-0.27px;">Properties</div>
<div class="dd" style="left:948.6px;top:59px;width:136px;height:20.4px"></div>
<div class="dd" style="left:948.6px;top:82.6px;width:136px;height:20.4px"></div>
<div class="dd" style="left:948.6px;top:106.6px;width:136px;height:20.4px"></div>
<div class="a" style="left:955px;top:61.6px;width:15px;height:14.6px;background:#ff0000;border:1px solid #e8e8e8"></div>
<div class="t" style="left:975.0px;top:62.2px;font-size:12.3px;line-height:15px;color:#f2f2f2;letter-spacing:-0.66px;">ByLayer</div>
<div class="a" style="left:955px;top:92.4px;width:64px;height:1.2px;background:#e6e6e6;"></div>
<div class="t" style="left:1021.0px;top:86.0px;font-size:12.3px;line-height:15px;color:#f2f2f2;letter-spacing:-0.66px;">ByLayer</div>
<div class="a" style="left:955px;top:116.4px;width:64px;height:1.2px;background:#e6e6e6;"></div>
<div class="t" style="left:1021.0px;top:109.8px;font-size:12.3px;line-height:15px;color:#f2f2f2;letter-spacing:-0.66px;">ByLayer</div>
<svg style="left:1074.6px;top:67.0px" width="8" height="4" viewBox="0 0 8 4"><path d="M0 0H8L4.0 4Z" fill="#d4d4d4"/></svg>
<svg style="left:1074.6px;top:91.0px" width="8" height="4" viewBox="0 0 8 4"><path d="M0 0H8L4.0 4Z" fill="#d4d4d4"/></svg>
<svg style="left:1074.6px;top:115.0px" width="8" height="4" viewBox="0 0 8 4"><path d="M0 0H8L4.0 4Z" fill="#d4d4d4"/></svg>
<div class="t" style="left:936.4px;top:133.8px;font-size:12px;line-height:14px;color:#f2f2f2;letter-spacing:-0.27px;">Properties</div>
<svg style="left:994.8px;top:139.0px" width="8" height="4" viewBox="0 0 8 4"><path d="M0 0H8L4.0 4Z" fill="#d4d4d4"/></svg>
<svg style="left:1076.6px;top:138.6px" width="6" height="6" viewBox="0 0 6 6"><path d="M0.4 0.4L4.6 4.6" stroke="#dcdcdc" stroke-width="1.1"/><path d="M5.6 1.2V5.6H1.2Z" fill="#dcdcdc"/></svg>
<svg style="left:0px;top:0px" width="1160" height="150" viewBox="0 0 1160 150"><path d="M1098 65H1094V91.6H1098M1112 91.6H1116V79" fill="none" stroke="#dcdcdc" stroke-width="1.3"/><rect x="1099.6" y="68.6" width="9" height="6.4" fill="#3f6f9c" stroke="#5ab7f4" stroke-width="1.2"/><circle cx="1104" cy="84" r="4.4" fill="#848b96" stroke="#bfbfbf" stroke-width="1.1"/><path d="M1116.60 60.60L1117.90 65.06L1121.97 62.83L1119.74 66.90L1124.20 68.20L1119.74 69.50L1121.97 73.57L1117.90 71.34L1116.60 75.80L1115.30 71.34L1111.23 73.57L1113.46 69.50L1109.00 68.20L1113.46 66.90L1111.23 62.83L1115.30 65.06Z" fill="#f5c860"/><rect x="1136.4" y="64" width="4.6" height="4" fill="none" stroke="#5ab7f4" stroke-width="1.1"/><circle cx="1139" cy="73.4" r="2.4" fill="#8a919c" stroke="#bfbfbf" stroke-width="0.8"/><path d="M1143.6 62.4H1146V69" fill="none" stroke="#dcdcdc" stroke-width="1.1"/><path d="M1143.4 66.4L1150 73M1150 66.4L1143.4 73" stroke="#f0364c" stroke-width="1.8"/><path d="M1138.4 85.6H1135.8V98.6H1138.4M1143 85.6H1145.6V90" fill="none" stroke="#dcdcdc" stroke-width="1.1"/><rect x="1138.6" y="87.6" width="4" height="3.4" fill="none" stroke="#5ab7f4" stroke-width="1"/><circle cx="1140.6" cy="95.4" r="2.2" fill="#8a919c" stroke="#bfbfbf" stroke-width="0.8"/><path d="M1142.6 100.2L1143.4 97.4L1147.6 93.2L1149.8 95.4L1145.6 99.6Z" fill="#f5c860"/><path d="M1147.6 93.2L1148.8 92L1151 94.2L1149.8 95.4Z" fill="#ee4a5c"/></svg>
<div class="a" style="left:1130px;top:106px;width:23.6px;height:21.4px;background:#35506e;border:1px solid #5ab7f4"></div>
<svg style="left:0px;top:0px" width="1160" height="150" viewBox="0 0 1160 150"><path d="M1138.4 109.6H1135.8V122.8H1138.4M1143 109.6H1145.6V113" fill="none" stroke="#dcdcdc" stroke-width="1.1"/><rect x="1138.6" y="111.6" width="4" height="3.4" fill="none" stroke="#57c878" stroke-width="1.1"/><circle cx="1140.4" cy="119.6" r="2.3" fill="#3fae62" stroke="#57c878" stroke-width="0.8"/><path d="M1143.4 113.4V123.6L1145.8 121.4L1147.6 125.2L1149.2 124.4L1147.4 120.8H1150.6Z" fill="#fafafa"/></svg>
<div class="t" style="left:1093.7px;top:95.8px;font-size:12px;line-height:14px;color:#f2f2f2;letter-spacing:-0.21px;">Group</div>
<div class="t" style="left:1096.8px;top:133.6px;font-size:12px;line-height:14px;color:#f2f2f2;letter-spacing:-0.53px;">Groups</div>
<svg style="left:1140.0px;top:139.0px" width="8" height="4" viewBox="0 0 8 4"><path d="M0 0H8L4.0 4Z" fill="#d4d4d4"/></svg>
<div class="a" style="left:1155.6px;top:53px;width:122px;height:97px;background:#2a313d;"></div>
<div class="a" style="left:1277px;top:53px;width:3px;height:97px;background:#2a313d;"></div>
<div class="pl" style="left:1157.4px;top:53.6px;width:58.8px;height:95.6px"></div>
<div class="pl" style="left:1219px;top:53.6px;width:58.2px;height:95.6px"></div>
<div class="pl" style="left:1280px;top:53.6px;width:58.3px;height:95.6px"></div>
<svg style="left:0px;top:0px" width="1340" height="150" viewBox="0 0 1340 150"><rect x="1172.8" y="70.6" width="28.4" height="6.4" fill="#f5c860"/><rect x="1175.24" y="70.6" width="0.9" height="2.2" fill="#8a6a28"/><rect x="1178.08" y="70.6" width="0.9" height="3.4" fill="#8a6a28"/><rect x="1180.92" y="70.6" width="0.9" height="2.2" fill="#8a6a28"/><rect x="1183.76" y="70.6" width="0.9" height="3.4" fill="#8a6a28"/><rect x="1186.60" y="70.6" width="0.9" height="2.2" fill="#8a6a28"/><rect x="1189.44" y="70.6" width="0.9" height="3.4" fill="#8a6a28"/><rect x="1192.28" y="70.6" width="0.9" height="2.2" fill="#8a6a28"/><rect x="1195.12" y="70.6" width="0.9" height="3.4" fill="#8a6a28"/><rect x="1197.96" y="70.6" width="0.9" height="2.2" fill="#8a6a28"/><rect x="1234.6" y="60.4" width="21.6" height="25" fill="#d8a868"/><rect x="1241.4" y="58" width="8" height="3.6" rx="1" fill="#f2f2f2"/><rect x="1239.8" y="60" width="11.2" height="2.6" fill="#f2f2f2"/><path d="M1242.6 67H1255.6L1260.8 72.2V90H1242.6Z" fill="#e2e2e2"/><path d="M1255.6 67V72.2H1260.8Z" fill="#f8f8f8"/><path d="M1292.6 62H1306.4V71.4H1325V86H1292.6Z" fill="#e0e0e0"/></svg>
<div class="t" style="left:1168.4px;top:94.0px;font-size:12px;line-height:14px;color:#f2f2f2;letter-spacing:-0.05px;">Utilities</div>
<div class="t" style="left:1222.6px;top:94.0px;font-size:12px;line-height:14px;color:#f2f2f2;letter-spacing:0.00px;">Clipboard</div>
<div class="t" style="left:1296.6px;top:94.0px;font-size:12px;line-height:14px;color:#f2f2f2;letter-spacing:-0.35px;">View</div>
<svg style="left:1183.0px;top:141.0px" width="8" height="4" viewBox="0 0 8 4"><path d="M0 0H8L4.0 4Z" fill="#d4d4d4"/></svg>
<svg style="left:1244.0px;top:141.0px" width="8" height="4" viewBox="0 0 8 4"><path d="M0 0H8L4.0 4Z" fill="#d4d4d4"/></svg>
<svg style="left:1305.0px;top:141.0px" width="8" height="4" viewBox="0 0 8 4"><path d="M0 0H8L4.0 4Z" fill="#d4d4d4"/></svg>

<!--FILETABS-->
<div class="a" style="left:6px;top:178px;width:1354px;height:4px;background:#3b4453;"></div>
<svg style="left:0px;top:0px" width="200" height="182" viewBox="0 0 200 182"><path d="M62.4 178L72.4 154H145.6L136.4 178Z" fill="#3b4453"/><path d="M15.4 174L22.6 158M178 174L184.4 158" stroke="#4b5465" stroke-width="1.1"/><path d="M126.6 162.8L133.4 169.6M133.4 162.8L126.6 169.6" stroke="#a9afb8" stroke-width="2"/><path d="M155 165.8H167.4M161.2 159.6V172" stroke="#f2f2f2" stroke-width="1.7"/></svg>
<div class="t" style="left:31.0px;top:159.4px;font-size:12.2px;line-height:15px;color:#f2f2f2;letter-spacing:-0.35px;">Start</div>
<div class="t" style="left:79.0px;top:159.4px;font-size:12px;line-height:14px;color:#f2f2f2;letter-spacing:-0.48px;font-weight:bold;">casa.1*</div>

<!--DRAWING-->
<div class="a" style="left:6px;top:182px;width:1354px;height:500.6px;background:#8b8b8b;"></div>
<div class="a" style="left:561px;top:192px;width:317px;height:448px;background:#ffffff;box-shadow:0 0 3px 2px rgba(0,0,0,.17)"></div>
<svg style="left:0px;top:0px" width="1366" height="700" viewBox="0 0 1366 700"><rect x="583" y="198.5" width="267.5" height="82.0" fill="none" stroke="#ff1a1a" stroke-width="1"/><rect x="580.5" y="288" width="275.0" height="73.5" fill="none" stroke="#ff1a1a" stroke-width="1"/><rect x="578.5" y="361.5" width="287.0" height="278.0" fill="none" stroke="#ff1a1a" stroke-width="1"/><path d="M613.7 271.6V205.4L652.4 231.4" fill="none" stroke="#05080c" stroke-width="3.3" stroke-linejoin="miter" stroke-linecap="butt"/><path d="M613.7 271.6V205.4L652.4 231.4" fill="none" stroke="#8fd0ea" stroke-width="1.3" stroke-linejoin="miter" stroke-linecap="butt"/><path d="M652.6 226V271.6" fill="none" stroke="#05080c" stroke-width="3.3" stroke-linejoin="miter" stroke-linecap="butt"/><path d="M652.6 226V271.6" fill="none" stroke="#8fd0ea" stroke-width="1.3" stroke-linejoin="miter" stroke-linecap="butt"/><path d="M791.5 226V271.6" fill="none" stroke="#05080c" stroke-width="3.3" stroke-linejoin="miter" stroke-linecap="butt"/><path d="M791.5 226V271.6" fill="none" stroke="#8fd0ea" stroke-width="1.3" stroke-linejoin="miter" stroke-linecap="butt"/><path d="M605.9 342.8V296L660.6 313.6" fill="none" stroke="#05080c" stroke-width="3.2" stroke-linejoin="miter" stroke-linecap="butt"/><path d="M605.9 342.8V296L660.6 313.6" fill="none" stroke="#8bbbd0" stroke-width="1.2" stroke-linejoin="miter" stroke-linecap="butt"/><path d="M605.9 342.8V295" fill="none" stroke="#05080c" stroke-width="4" stroke-linejoin="miter" stroke-linecap="butt"/><path d="M605.9 342.8V295" fill="none" stroke="#8bbbd0" stroke-width="2" stroke-linejoin="miter" stroke-linecap="butt"/><path d="M660.9 310V342.8" fill="none" stroke="#05080c" stroke-width="4" stroke-linejoin="miter" stroke-linecap="butt"/><path d="M660.9 310V342.8" fill="none" stroke="#8bbbd0" stroke-width="2" stroke-linejoin="miter" stroke-linecap="butt"/><path d="M783.9 310V342.8" fill="none" stroke="#05080c" stroke-width="4" stroke-linejoin="miter" stroke-linecap="butt"/><path d="M783.9 310V342.8" fill="none" stroke="#8bbbd0" stroke-width="2" stroke-linejoin="miter" stroke-linecap="butt"/><path d="M783.8 313.6L839.6 296V342.8" fill="none" stroke="#05080c" stroke-width="3.2" stroke-linejoin="miter" stroke-linecap="butt"/><path d="M783.8 313.6L839.6 296V342.8" fill="none" stroke="#8bbbd0" stroke-width="1.2" stroke-linejoin="miter" stroke-linecap="butt"/><path d="M839.6 295V342.8" fill="none" stroke="#05080c" stroke-width="4" stroke-linejoin="miter" stroke-linecap="butt"/><path d="M839.6 295V342.8" fill="none" stroke="#8bbbd0" stroke-width="2" stroke-linejoin="miter" stroke-linecap="butt"/><path d="M845 383H711A117 117 0 0 0 711 617H845Z" fill="none" stroke="#05080c" stroke-width="4.2" stroke-linejoin="miter" stroke-linecap="butt"/><path d="M845 383H711A117 117 0 0 0 711 617H845Z" fill="none" stroke="#8fd0ea" stroke-width="2" stroke-linejoin="miter" stroke-linecap="butt"/><path d="M845 438H711A61.5 61.5 0 0 0 711 561H845" fill="none" stroke="#05080c" stroke-width="4.2" stroke-linejoin="miter" stroke-linecap="butt"/><path d="M845 438H711A61.5 61.5 0 0 0 711 561H845" fill="none" stroke="#8fd0ea" stroke-width="2" stroke-linejoin="miter" stroke-linecap="butt"/><path d="M612.0500000000001 271.6H615.35" stroke="#05080c" stroke-width="1"/><path d="M650.95 271.6H654.25" stroke="#05080c" stroke-width="1"/><path d="M789.85 271.6H793.15" stroke="#05080c" stroke-width="1"/><path d="M789.85 226H793.15" stroke="#05080c" stroke-width="1"/><path d="M650.95 226H654.25" stroke="#05080c" stroke-width="1"/><path d="M603.9 342.8H607.9" stroke="#05080c" stroke-width="1"/><path d="M658.9 342.8H662.9" stroke="#05080c" stroke-width="1"/><path d="M781.9 342.8H785.9" stroke="#05080c" stroke-width="1"/><path d="M837.6 342.8H841.6" stroke="#05080c" stroke-width="1"/><path d="M658.9 310H662.9" stroke="#05080c" stroke-width="1"/><path d="M781.9 310H785.9" stroke="#05080c" stroke-width="1"/><path d="M933 434.5H1001.6M967.5 399.6V468.4" stroke="#101010" stroke-width="1"/><rect x="965" y="432" width="5" height="5" fill="#8b8b8b" stroke="#101010" stroke-width="1"/><path d="M16.2 585.4V672.4H66.6Z" fill="none" stroke="#1747f2" stroke-width="1.1"/><path d="M16.2 663.4H24.4V672.4" fill="none" stroke="#1747f2" stroke-width="1.1"/><path d="M18.6 611.4L24 618L30.8 611M24 618V624" fill="none" stroke="#1747f2" stroke-width="1.1"/><path d="M44 658.4L56.4 670.6M56.8 658L44 671" stroke="#1747f2" stroke-width="1.1"/><rect x="1298.6" y="197.6" width="10.8" height="3.7" fill="#f4f4f4" stroke="#3a3e49" stroke-width="1.1"/><rect x="1320.9" y="191.6" width="8.5" height="8" fill="#f4f4f4" stroke="#3a3e49" stroke-width="1.1"/><rect x="1318.6" y="194.2" width="8.8" height="8.1" fill="#f7f7f7" stroke="#3a3e49" stroke-width="1.1"/><rect x="1321.3" y="196.5" width="3.5" height="3.5" fill="#7a7a7a" stroke="#3a3e49" stroke-width="0.9"/><path d="M1339.8 193.6L1347.4 200.4M1347.4 193.6L1339.8 200.4" stroke="#3a3e49" stroke-width="4.6" stroke-linecap="square"/><path d="M1339.8 193.6L1347.4 200.4M1347.4 193.6L1339.8 200.4" stroke="#f7f7f7" stroke-width="2.7" stroke-linecap="square"/></svg>
<div class="a" style="left:1323.2px;top:391.8px;width:33.8px;height:134px;background:#a1a1a1;border:1.5px solid #717171;border-radius:5px;box-shadow:inset 0 0 0 1px #b2b2b2"></div>
<svg style="left:0px;top:0px" width="1366" height="700" viewBox="0 0 1366 700"><path d="M1325 403H1355.6M1325 438.4H1355.6" stroke="#b4b4b4" stroke-width="0.9"/><circle cx="1349.6" cy="398" r="3" fill="none" stroke="#8a8a8a" stroke-width="0.9"/><path d="M1347.8 396.2L1351.4 399.8M1351.4 396.2L1347.8 399.8" stroke="#8a8a8a" stroke-width="0.8"/><circle cx="1337.6" cy="423" r="8.6" fill="none" stroke="#8a8a8a" stroke-width="1.3"/><circle cx="1337.6" cy="423" r="4.6" fill="none" stroke="#8a8a8a" stroke-width="1.2"/><path d="M1329 423V431.6H1337.6" fill="none" stroke="#8a8a8a" stroke-width="1.3"/><path d="M1332 452.6L1330.2 447.4C1331.4 446 1333 447 1333.6 448.6L1335 452V443.6C1335 441.8 1337.4 441.8 1337.4 443.6V450V442.4C1337.4 440.6 1339.8 440.6 1339.8 442.4V450V443.4C1339.8 441.8 1342.2 441.8 1342.2 443.4V451V446C1342.2 444.6 1344.4 444.6 1344.4 446V455C1344.4 461 1341.6 464.6 1338.4 464.6C1334.8 464.6 1333.4 460 1332 452.6Z" fill="none" stroke="#8a8a8a" stroke-width="1"/><path d="M1328.6 473.4L1343.6 488.6M1343.6 473.4L1328.6 488.6" stroke="#8a8a8a" stroke-width="1.1"/><path d="M1328 472.8V477M1328 472.8H1332.2M1344.2 472.8H1340M1344.2 472.8V477M1328 489.2V485M1328 489.2H1332.2" stroke="#8a8a8a" stroke-width="1.1"/><circle cx="1345.6" cy="486.6" r="4.2" fill="#a1a1a1" stroke="#8a8a8a" stroke-width="1.3"/><path d="M1348.6 489.8L1352.4 493.8" stroke="#8a8a8a" stroke-width="2"/><path d="M1335.6 502H1340.6L1338.1 504.6Z" fill="#8a8a8a"/><circle cx="1349.6" cy="518.6" r="3" fill="none" stroke="#8a8a8a" stroke-width="0.9"/><path d="M1347.8 518.6H1351.4" stroke="#8a8a8a" stroke-width="0.9"/></svg>
<div class="t" style="left:1339.6px;top:427.5px;font-size:7.5px;line-height:9px;color:#8aa4c8;font-weight:bold;">2D</div>

<!--CMDLINE-->
<div class="a" style="left:289.4px;top:656px;width:60px;height:26px;background:#424a57;border-radius:4px 0 0 4px"></div>
<div class="a" style="left:347.4px;top:656px;width:728.4px;height:26px;background:#dedede;border:1px solid #3a414d;border-radius:0 3px 3px 0"></div>
<svg style="left:0px;top:0px" width="1100" height="700" viewBox="0 0 1100 700"><rect x="292.8" y="660.6" width="1.4" height="1.2" fill="#cfd3d8"/><rect x="295.4" y="660.6" width="1.4" height="1.2" fill="#cfd3d8"/><rect x="292.8" y="662.7" width="1.4" height="1.2" fill="#cfd3d8"/><rect x="295.4" y="662.7" width="1.4" height="1.2" fill="#cfd3d8"/><rect x="292.8" y="664.8" width="1.4" height="1.2" fill="#cfd3d8"/><rect x="295.4" y="664.8" width="1.4" height="1.2" fill="#cfd3d8"/><rect x="292.8" y="666.9" width="1.4" height="1.2" fill="#cfd3d8"/><rect x="295.4" y="666.9" width="1.4" height="1.2" fill="#cfd3d8"/><rect x="292.8" y="669.0" width="1.4" height="1.2" fill="#cfd3d8"/><rect x="295.4" y="669.0" width="1.4" height="1.2" fill="#cfd3d8"/><rect x="292.8" y="671.1" width="1.4" height="1.2" fill="#cfd3d8"/><rect x="295.4" y="671.1" width="1.4" height="1.2" fill="#cfd3d8"/><rect x="292.8" y="673.2" width="1.4" height="1.2" fill="#cfd3d8"/><rect x="295.4" y="673.2" width="1.4" height="1.2" fill="#cfd3d8"/><rect x="292.8" y="675.3" width="1.4" height="1.2" fill="#cfd3d8"/><rect x="295.4" y="675.3" width="1.4" height="1.2" fill="#cfd3d8"/><rect x="292.8" y="677.4" width="1.4" height="1.2" fill="#cfd3d8"/><rect x="295.4" y="677.4" width="1.4" height="1.2" fill="#cfd3d8"/><path d="M305.6 664.8L314 673.4M314 664.8L305.6 673.4" stroke="#ececec" stroke-width="1.7"/><path d="M327 676.4L335 667.6" stroke="#d6d6d6" stroke-width="2.8" stroke-linecap="round"/><path d="M341 663.6A4.2 4.2 0 1 1 336.6 660.6L337.8 664L340 664.6Z" fill="#d6d6d6"/><rect x="351.6" y="663" width="15" height="12.4" fill="#e4e4e4" stroke="#5a5f66" stroke-width="1.1"/><rect x="351.6" y="663" width="15" height="2.6" fill="#5a5f66"/><path d="M354 668.4L356.6 670L354 671.6M357.6 672.4H361" fill="none" stroke="#4a4f56" stroke-width="0.9"/><path d="M369.4 668H377L373.2 672Z" fill="#555a62"/><path d="M1064 670.8H1072L1068 666.8Z" fill="#6a6e75"/></svg>
<div class="t" style="left:383.6px;top:663.4px;font-size:12px;line-height:14px;color:#7a7e85;letter-spacing:-0.24px;font-style:italic;font-family:'Liberation Mono',monospace;">Type a command</div>

<!--LAYOUTTABS-->
<div class="a" style="left:6px;top:682.6px;width:1354px;height:4px;background:#3b4453;"></div>
<svg style="left:0px;top:0px" width="320" height="720" viewBox="0 0 320 720"><path d="M187.4 710.8L196.8 686.6H265.2L256 710.8Z" fill="#3b4453"/><path d="M15 708L21.4 691.6" stroke="#4b5465" stroke-width="1.1"/><path d="M73.2 708L79.60000000000001 691.6" stroke="#4b5465" stroke-width="1.1"/><path d="M122.4 708L128.8 691.6" stroke="#4b5465" stroke-width="1.1"/><path d="M296.2 708L302.59999999999997 691.6" stroke="#4b5465" stroke-width="1.1"/><path d="M273.6 699.4H285.6M279.6 693.4V705.4" stroke="#f4f4f4" stroke-width="1.8"/></svg>
<div class="t" style="left:31.3px;top:693.1px;font-size:12.3px;line-height:15px;color:#f2f2f2;letter-spacing:0.04px;">Model</div>
<div class="t" style="left:89.3px;top:693.1px;font-size:12.3px;line-height:15px;color:#f2f2f2;letter-spacing:-0.42px;">A3rd</div>
<div class="t" style="left:138.2px;top:693.1px;font-size:12.3px;line-height:15px;color:#f2f2f2;letter-spacing:-0.40px;">Layout1</div>
<div class="t" style="left:204.0px;top:693.7px;font-size:12px;line-height:14px;color:#f2f2f2;letter-spacing:-0.37px;font-weight:bold;">Layout2</div>

<!--STATUSBAR-->
<div class="sb" style="left:875px;width:40.0px"></div>
<div class="sb" style="left:918px;width:24.0px"></div>
<div class="sb" style="left:943px;width:104.0px"></div>
<div class="sb" style="left:1096px;width:15.6px"></div>
<div class="sb" style="left:1115px;width:71.8px"></div>
<div class="sb" style="left:1190px;width:39.6px"></div>
<div class="sb" style="left:1231.4px;width:23.4px"></div>
<div class="sb" style="left:1258px;width:23.8px"></div>
<div class="sb" style="left:1285px;width:21.8px"></div>
<div class="sb" style="left:1309.6px;width:47.8px"></div>
<div class="sb" style="left:1049px;width:22px;top:690px;height:22px;background:#5b8bc9"></div><div class="sb" style="left:1073px;width:22px;top:690px;height:22px;background:#5b8bc9"></div>
<div class="t" style="left:878.8px;top:693.5px;font-size:12.2px;line-height:15px;color:#f0f0f0;transform:scaleX(0.81);transform-origin:0 50%;">PAPER</div>
<svg style="left:0px;top:0px" width="1366" height="720" viewBox="0 0 1366 720"><path d="M922.4 696.6H929.6M926 693V700.2" stroke="#e4e4e4" stroke-width="1.2"/><rect x="929" y="703" width="9.6" height="4" fill="#e4e4e4"/><path d="M948.4 693.4V707.4H962.6" fill="none" stroke="#e4e4e4" stroke-width="1.4"/><path d="M948.4 702H953.6V707.4" fill="none" stroke="#e4e4e4" stroke-width="1.1"/><circle cx="977.6" cy="701.4" r="6" fill="none" stroke="#e4e4e4" stroke-width="1.3"/><path d="M977.6 701.4L986 693M977.6 701.4H987" stroke="#e4e4e4" stroke-width="1.2"/><path d="M994.8 699H1002.8L998.8 703.2Z" fill="#e4e4e4"/><path d="M1018.4 692.6V709.6" stroke="#57c878" stroke-width="1.1"/><path d="M1011.2 694L1025.4 708.4" stroke="#f0505a" stroke-width="1.1"/><circle cx="1018.4" cy="701.2" r="1.7" fill="#363e4c" stroke="#e4e4e4" stroke-width="1"/><path d="M1034.8 699H1042.8L1038.8 703.2Z" fill="#e4e4e4"/><path d="M1052.6 706.8H1068.4M1054 706.4L1067 693.6" stroke="#fff" stroke-width="1.5"/><circle cx="1060.2" cy="700.4" r="1.6" fill="#fff"/><rect x="1078.4" y="696.4" width="12.6" height="12" fill="none" stroke="#fff" stroke-width="1.4"/><rect x="1076" y="693.6" width="4.4" height="4.4" fill="#5b8bcb" stroke="#fff" stroke-width="1.1"/><path d="M1099.8 699H1107.8L1103.8 703.2Z" fill="#e4e4e4"/><path d="M1121 695.4H1134.4V708.2H1119.6V697" fill="none" stroke="#e4e4e4" stroke-width="1.2" stroke-dasharray="3 1.6"/><rect x="1124.4" y="699.6" width="6" height="5.6" fill="none" stroke="#e4e4e4" stroke-width="1.1"/><path d="M1119.6 694L1123.6 695.2L1120.8 698Z" fill="#e4e4e4"/><path d="M1149.4 693.6L1152.0 701.6L1156.4 706.6L1151.4 703.8L1149.4 708.6L1147.4 703.8L1142.4 708.6L1146.8000000000002 701.6Z" fill="#e4e4e4"/><circle cx="1156.8" cy="695.6" r="2.2" fill="none" stroke="#e4e4e4" stroke-width="1"/><path d="M1172.6 693.6L1175.1999999999998 701.6L1179.6 706.6L1174.6 703.8L1172.6 708.6L1170.6 703.8L1165.6 708.6L1170.0 701.6Z" fill="#e4e4e4"/><path d="M1180.6 692.6L1177.4 697.6H1179.8L1178.4 701.6L1182.4 696H1180Z" fill="#e4e4e4"/><path d="M1206.90 699.77L1209.14 699.84L1209.14 701.76L1206.90 701.83L1206.13 703.67L1207.67 705.31L1206.31 706.67L1204.67 705.13L1202.83 705.90L1202.76 708.14L1200.84 708.14L1200.77 705.90L1198.93 705.13L1197.29 706.67L1195.93 705.31L1197.47 703.67L1196.70 701.83L1194.46 701.76L1194.46 699.84L1196.70 699.77L1197.47 697.93L1195.93 696.29L1197.29 694.93L1198.93 696.47L1200.77 695.70L1200.84 693.46L1202.76 693.46L1202.83 695.70L1204.67 696.47L1206.31 694.93L1207.67 696.29L1206.13 697.93Z" fill="#e4e4e4"/><circle cx="1201.8" cy="700.8" r="2.5" fill="#363e4c"/><path d="M1218 699H1226L1222 703.2Z" fill="#e4e4e4"/><path d="M1235.2 700.8H1250.8M1243 693V708.6" stroke="#e4e4e4" stroke-width="1.6"/><rect x="1262.6" y="693.6" width="5.4" height="5.4" fill="none" stroke="#e4e4e4" stroke-width="1.1"/><circle cx="1275.2" cy="699.6" r="2.9" fill="none" stroke="#e4e4e4" stroke-width="1.1"/><path d="M1265.8 708.4L1269 702.6L1272.2 708.4Z" fill="none" stroke="#e4e4e4" stroke-width="1.1"/><path d="M1292 694H1300L1303.6 697.6V703H1292Z" fill="#4f8fdc"/><path d="M1288.4 702.4H1296.4V708.4H1288.4Z" fill="#f2b844"/><path d="M1292 691.6V701M1288 696H1297" stroke="#fff" stroke-width="1.1"/><circle cx="1292" cy="696" r="1.4" fill="none" stroke="#fff" stroke-width="0.9"/><path d="M1295.6 705L1298.6 708L1304.6 701.6" fill="none" stroke="#37c35a" stroke-width="2"/><rect x="1314.4" y="695" width="15" height="11.4" fill="none" stroke="#e4e4e4" stroke-width="1.2"/><path d="M1317.6 703.6L1320.6 700.6M1326.4 697.6L1323.4 700.6" stroke="#e4e4e4" stroke-width="1"/><path d="M1316.6 704.6V701.4L1319.8 704.6ZM1327.4 696.6V699.8L1324.2 696.6Z" fill="#e4e4e4"/><path d="M1338.4 695H1353.6M1338.4 700.8H1353.6M1338.4 706.6H1353.6" stroke="#e4e4e4" stroke-width="1.6"/></svg>

<!--TASKBAR-->
<div class="a" style="left:0px;top:720px;width:1366px;height:48px;background:#1f1c3a;border-top:1px solid #363350"></div>
<svg style="left:0px;top:0px" width="1366" height="768" viewBox="0 0 1366 768"><defs><linearGradient id="gw" x1="0" y1="0" x2="1" y2="1"><stop offset="0" stop-color="#6fdcff"/><stop offset="1" stop-color="#1b9cf0"/></linearGradient><linearGradient id="gp" x1="0" y1="0" x2="0" y2="1"><stop offset="0" stop-color="#6f97ff"/><stop offset="1" stop-color="#5a49f2"/></linearGradient><linearGradient id="ge" x1="0" y1="0" x2="1" y2="1"><stop offset="0" stop-color="#35c1f1"/><stop offset="1" stop-color="#0c59a4"/></linearGradient><linearGradient id="gph" x1="0" y1="0" x2="1" y2="1"><stop offset="0" stop-color="#2f9bf5"/><stop offset="1" stop-color="#2746c8"/></linearGradient></defs><rect x="22.2" y="735.8" width="20" height="16.4" rx="3.6" fill="url(#gp)"/><path d="M29.2 739.4L36.2 744L29.2 748.6Z" fill="#fff"/><circle cx="39" cy="734.8" r="8" fill="#ff8fa0"/><rect x="388" y="736.2" width="7.4" height="7.4" fill="url(#gw)"/><rect x="388" y="744.4000000000001" width="7.4" height="7.4" fill="url(#gw)"/><rect x="396.2" y="736.2" width="7.4" height="7.4" fill="url(#gw)"/><rect x="396.2" y="744.4000000000001" width="7.4" height="7.4" fill="url(#gw)"/><path d="M431.2 747.4L434.6 750.8" stroke="#f0f0f0" stroke-width="2.2" stroke-linecap="round"/><circle cx="427" cy="743" r="5.6" fill="#3a3757" stroke="#dcdcdc" stroke-width="1.5"/><rect x="455.6" y="736.4" width="12.4" height="10.8" rx="1.2" fill="#f2f2f2"/><rect x="452" y="740.4" width="12" height="10.8" rx="1.2" fill="#7a7a7a" fill-opacity="0.92"/><circle cx="495.6" cy="739.6" r="2.2" fill="#7b83eb"/><rect x="492.6" y="742.4" width="6.6" height="8" rx="2.2" fill="#5059c9"/><circle cx="489.6" cy="738.4" r="2.9" fill="#7b83eb"/><path d="M485.4 742.2H494.6V748.6A3.6 3.6 0 0 1 491 752.2H489A3.6 3.6 0 0 1 485.4 748.6Z" fill="#7b83eb"/><rect x="483.6" y="741" width="8.4" height="8.4" rx="1" fill="#4b53bc"/><path d="M515.8 741.4L524 736L532.4 741.4V751H515.8Z" fill="#1271c4"/><path d="M518 739.4H530.4V746H518Z" fill="#e8f4fd"/><path d="M515.8 741.4L524 747L532.4 741.4V751H515.8Z" fill="#35b6f2"/><path d="M515.8 751L524 745.4L532.4 751Z" fill="#1c8fe0"/><circle cx="556" cy="744" r="8.2" fill="url(#ge)"/><path d="M549 741.4C551 736.6 559 734.6 563.4 740.6C564.6 742.6 564.4 745.4 562 746.4C559.6 747.2 557 746.8 556.6 745C556.2 743.2 557.6 742.4 557 741C556 739 551.4 738.6 549 741.4Z" fill="#5fd86b"/><path d="M553.6 743.6C552.6 747 554.6 750.4 559 751.2C556 752.6 551 751.6 549.4 747.4C548.8 745.4 549.6 743 551.4 742.4Z" fill="#0b4f96"/><path d="M580 738.4C580 737.6 580.6 737.2 581.2 737.2H586L587.6 739H595C595.8 739 596.2 739.6 596.2 740.2V742H580Z" fill="#e9a21c"/><rect x="580" y="740.4" width="16.2" height="10.8" rx="1" fill="#fbd04e"/><rect x="584" y="746.4" width="8.2" height="4.8" rx="0.8" fill="#2f8ae0"/><rect x="585.4" y="747.8" width="5.4" height="1.2" fill="#1b5fb2"/><path d="M615.6 738.6V737.4A1.6 1.6 0 0 1 617.2 735.8H621.6A1.6 1.6 0 0 1 623.2 737.4V738.6" fill="none" stroke="#35b6f2" stroke-width="1.2"/><path d="M612 738.4H626.8V749.6A2 2 0 0 1 624.8 751.6H614A2 2 0 0 1 612 749.6Z" fill="#f4f4f4"/><rect x="615.8" y="741.6" width="3" height="3" fill="#f25022"/><rect x="619.8" y="741.6" width="3" height="3" fill="#7fba00"/><rect x="615.8" y="745.6" width="3" height="3" fill="#00a4ef"/><rect x="619.8" y="745.6" width="3" height="3" fill="#ffb900"/><circle cx="652" cy="744" r="8.2" fill="#ea4335"/><path d="M652 744L644.9 748.1A8.2 8.2 0 0 0 652 752.2L656.1 745Z" fill="#34a853"/><path d="M652 744L644.9 748.1A8.2 8.2 0 0 1 644.9 739.9Z" fill="#34a853"/><path d="M652 744H660.2A8.2 8.2 0 0 1 652 752.2Z" fill="#fbbc05"/><path d="M652 744L659.1 739.9A8.2 8.2 0 0 1 652 752.2Z" fill="#fbbc05"/><circle cx="652" cy="744" r="3.9" fill="#fff"/><circle cx="652" cy="744" r="3" fill="#4285f4"/><circle cx="660" cy="733.8" r="1.9" fill="#3fcff5"/><rect x="677" y="737" width="14.2" height="14.2" rx="1.6" fill="url(#gph)"/><path d="M677 751.2L684.4 742.4L691.2 749.6V751.2Z" fill="#63c4f7"/><path d="M681 751.2L686.2 745.6L691.2 751.2Z" fill="#2f7fe0"/><circle cx="687.8" cy="740" r="1.3" fill="#e8f0ff"/><path d="M708.2 752.2L709.4 748A8 8 0 1 1 712.4 750.8Z" fill="none" stroke="#2bd366" stroke-width="1.7" stroke-linejoin="round"/><path d="M712.8 739.8C712 740.6 712 742.2 713.4 744.2C715 746.4 717.4 748 719 747.6C720 747.2 720.4 746.2 720 745.8L718.2 744.8L717.2 745.6C716 745.2 715 744 714.6 743L715.4 742L714.4 740C714 739.4 713.2 739.4 712.8 739.8Z" fill="#2bd366"/><circle cx="724" cy="733.8" r="1.9" fill="#3fcff5"/><circle cx="748" cy="744" r="8" fill="#0a0a0a"/><path d="M748.9 739.2V746.4A2 2 0 1 1 746.6 744.4" fill="none" stroke="#25f4ee" stroke-width="1.5" transform="translate(-0.5 -0.4)"/><path d="M748.9 739.2V746.4A2 2 0 1 1 746.6 744.4" fill="none" stroke="#fe2c55" stroke-width="1.5" transform="translate(0.5 0.4)"/><path d="M748.9 739.2V746.4A2 2 0 1 1 746.6 744.4M748.9 739.2C749.2 741 750.4 742 752 742.2" fill="none" stroke="#fff" stroke-width="1.5"/><rect x="772.5" y="736.5" width="14.8" height="14.8" rx="2.4" fill="#fff" stroke="#8cc63f" stroke-width="1.4"/><path d="M772.4 742.8L778.8 736.4H783.4L772.4 747.4Z" fill="#5b8df2"/><rect x="804.7" y="736.5" width="14.8" height="14.8" rx="2.4" fill="#fff" stroke="#f7a04b" stroke-width="1.4"/><path d="M804.6 742.8L811.0 736.4H815.6L804.6 747.4Z" fill="#5b8df2"/><rect x="836.7" y="736.5" width="14.8" height="14.8" rx="2.4" fill="#fff" stroke="#ec1c24" stroke-width="1.4"/><path d="M836.6 742.8L843.0 736.4H847.6L836.6 747.4Z" fill="#5b8df2"/><rect x="862.2" y="724.2" width="27.6" height="39.4" rx="4" fill="#2f2c4b" stroke="#3b3857" stroke-width="0.8"/><path d="M871.4 736L868.8 737.6V748.4L871.4 747.2Z" fill="#c2103f"/><rect x="871.4" y="736" width="11.6" height="11.2" fill="#e2134c"/><path d="M868.8 748.4L871.4 747.2H883V752H870.2Z" fill="#8f0f33"/><rect x="871.2" y="760" width="11" height="3.2" rx="1.6" fill="#41d2f6"/><circle cx="908" cy="744" r="8" fill="#1ed760"/><path d="M903.2 741.4C906.4 740.4 910 740.6 913 742.2M903.8 744.2C906.4 743.4 909.4 743.6 912 745M904.4 746.8C906.6 746.2 909 746.4 911 747.6" fill="none" stroke="#14141e" stroke-width="1.4" stroke-linecap="round"/><rect x="932" y="736" width="16" height="16" fill="#b5090f"/><rect x="964.6" y="737.6" width="11.6" height="14" fill="#f5f5ee" stroke="#7a7a6a" stroke-width="0.8"/><rect x="966" y="743.4" width="8.8" height="6.6" fill="#8fd64a"/><path d="M966 736.6V739M968 736.6V739M970 736.6V739M972 736.6V739" stroke="#555" stroke-width="0.8"/><path d="M971.4 748.8L972.4 745.6L978.4 737.4L980.2 738.8L974.2 747Z" fill="#f2b632"/><path d="M978.4 737.4L979.2 736.2L981 737.6L980.2 738.8Z" fill="#d8343f"/><rect x="586.3000000000001" y="760.2" width="3.6" height="2.6" rx="1.3" fill="#9a9aa8"/><rect x="650.2" y="760.2" width="3.6" height="2.6" rx="1.3" fill="#9a9aa8"/><rect x="906.2" y="760.2" width="3.6" height="2.6" rx="1.3" fill="#9a9aa8"/><rect x="938.2" y="760.2" width="3.6" height="2.6" rx="1.3" fill="#9a9aa8"/><rect x="970.2" y="760.2" width="3.6" height="2.6" rx="1.3" fill="#9a9aa8"/><path d="M1079.4 746.4L1084.4 741.4L1089.4 746.4" fill="none" stroke="#f0f0f0" stroke-width="1.4"/><rect x="1108" y="736" width="16" height="15.6" rx="1.4" fill="#1a5fd2" stroke="#e6effc" stroke-width="0.9"/><rect x="1108.8" y="737" width="14.4" height="2.4" fill="#dfeafb"/><rect x="1108.8" y="748.2" width="14.4" height="2.4" fill="#dfeafb"/><path d="M1142.4 749.4A3.4 3.4 0 0 1 1143 742.8A4.6 4.6 0 0 1 1151.6 742A3.8 3.8 0 0 1 1153 749.4Z" fill="#7a7d8c"/><path d="M1141.6 737.4L1155 751.4" stroke="#1f1c3a" stroke-width="3"/><path d="M1141.6 737.4L1155 751.4" stroke="#b9bbc6" stroke-width="1.1"/><path d="M1173.4 742.6A6.6 6.6 0 0 1 1185.4 740M1186.4 746A6.6 6.6 0 0 1 1175 749" fill="none" stroke="#f0f0f0" stroke-width="1.3"/><path d="M1186.8 737V741.4H1182.4M1173 752V747.6H1177.4" fill="none" stroke="#f0f0f0" stroke-width="1.3"/><circle cx="1184.2" cy="748.2" r="3.8" fill="#ff9a1e"/><path d="M1204.6 741.6A10.4 10.4 0 0 1 1219 741.6M1207 744.4A7 7 0 0 1 1216.6 744.4M1209.4 747.2A3.6 3.6 0 0 1 1214.2 747.2" fill="none" stroke="#f0f0f0" stroke-width="1.3"/><circle cx="1211.8" cy="749.6" r="1.3" fill="#f0f0f0"/><path d="M1228.4 741.6H1231.4L1235.4 738V750L1231.4 746.6H1228.4Z" fill="none" stroke="#f0f0f0" stroke-width="1.2" stroke-linejoin="round"/><path d="M1238.4 741.8L1243 746.4M1243 741.8L1238.4 746.4" stroke="#f0f0f0" stroke-width="1.2"/><rect x="1254.4" y="740.4" width="11.6" height="7.6" rx="1.6" fill="none" stroke="#f0f0f0" stroke-width="1.2"/><rect x="1256" y="742" width="8.4" height="4.4" rx="0.6" fill="#f0f0f0"/><rect x="1266.6" y="742.6" width="1.4" height="3.2" fill="#f0f0f0"/><path d="M1252.4 736.8H1255.4V741.4" fill="none" stroke="#f0f0f0" stroke-width="1.1"/><path d="M1252.2 742.4H1257" stroke="#1f1c3a" stroke-width="1.6"/></svg>
<div class="t" style="left:486.1px;top:742.4px;font-size:5.6px;line-height:7px;color:#fff;font-weight:bold;">T</div>
<div class="t" style="left:36.0px;top:728.7px;font-size:10.5px;line-height:13px;color:#111;">5</div>
<div class="t" style="left:777.6px;top:738.9px;font-size:10px;line-height:12px;color:#8cc63f;font-weight:bold;">P</div>
<div class="t" style="left:809.6px;top:738.9px;font-size:10px;line-height:12px;color:#f7a04b;font-weight:bold;">S</div>
<div class="t" style="left:841.8px;top:738.9px;font-size:10px;line-height:12px;color:#ec1c24;font-weight:bold;">T</div>
<div class="t" style="left:874.2px;top:737.0px;font-size:8.6px;line-height:10px;color:#fff;font-weight:bold;">A</div>
<div class="t" style="left:872.6px;top:748.2px;font-size:3.6px;line-height:4px;color:#f3c6d2;letter-spacing:0.27px;font-weight:bold;">CAD</div>
<div class="t" style="left:933.2px;top:737.6px;font-size:12.5px;line-height:15px;color:#fff;letter-spacing:-0.24px;font-weight:bold;font-style:italic;">Fz</div>
<div class="t" style="left:1110.0px;top:741.1px;font-size:6.6px;line-height:8px;color:#fff;letter-spacing:-0.77px;font-weight:bold;">CCB</div>
<div class="t" style="left:1318.0px;top:728.8px;font-size:11.6px;line-height:14px;color:#fafafa;letter-spacing:-0.07px;">20:08</div>
<div class="t" style="left:1285.3px;top:744.8px;font-size:11.6px;line-height:14px;color:#fafafa;letter-spacing:0.33px;">24/10/2025</div>

</body>
</html>
